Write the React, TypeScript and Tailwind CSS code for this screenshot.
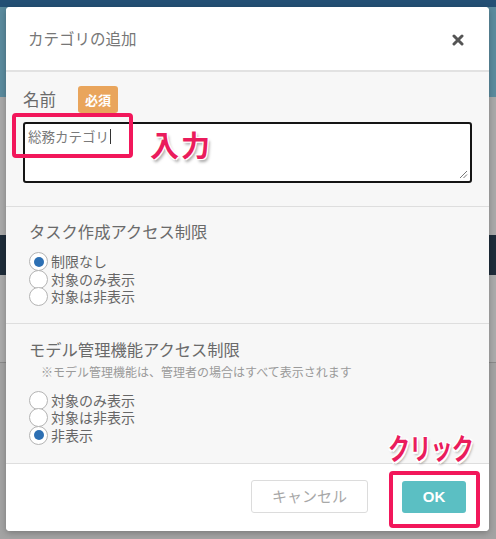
import React from 'react';

const jp = '[font-family:"Noto_Sans_CJK_JP","Noto_Sans",sans-serif]';

type Opt = { label: string; checked?: boolean };

const Radio: React.FC<Opt> = ({ label, checked }) => (
  <label className="flex items-center h-[17.5px]">
    <span className="relative flex items-center justify-center w-[19px] h-[19px] rounded-full border-[1.5px] border-[#b4b4b4] bg-white shrink-0">
      {checked && <span className="w-[10px] h-[10px] rounded-full bg-[#2c6fb3]" />}
    </span>
    <span className="ml-[3px] text-[14px] leading-[17.5px] text-[#666]">{label}</span>
  </label>
);

const Section: React.FC<{ title: string; note?: string; opts: Opt[]; className?: string }> = ({
  title,
  note,
  opts,
  className,
}) => (
  <div className={`px-[23px] border-b border-[#dedede] ${className || ''}`}>
    <h4 className="text-[16.3px] leading-[24px] text-[#6a6a6a]">{title}</h4>
    {note && <p className="mt-[2px] pl-[12px] text-[12px] leading-[18px] text-[#9a9a9a]">{note}</p>}
    <div className={note ? 'mt-[11px]' : 'mt-[10px]'}>
      {opts.map((o) => (
        <Radio key={o.label} {...o} />
      ))}
    </div>
  </div>
);

const App: React.FC = () => {
  return (
    <div className={`relative w-[496px] h-[539px] overflow-hidden bg-[#a6a6a6] ${jp}`}>
      {/* page behind the overlay */}
      <div className="h-[7px] bg-[#234f74]" />
      <div className="h-[90px] bg-[#5b8b9e]" />
      <div className="h-[138px] bg-[#a9a9a9]" />
      <div className="h-[40px] bg-[#1e2c3a]" />
      <div className="h-[88px] bg-[#ababab] border-b border-[#8a8a8a]" />
      <div className="h-[176px] bg-[#a3a3a3]" />

      {/* modal */}
      <div className="absolute top-[7px] left-[6px] w-[483px] rounded-[4px] bg-[#f7f7f7] shadow-[0_2px_6px_rgba(0,0,0,0.25)] overflow-hidden">
        <div className="h-[65px] bg-white border-b-2 border-[#e2e2e2] flex items-center justify-between pl-[22px] pr-[25px]">
          <h3 className="text-[15.5px] text-[#777]">カテゴリの追加</h3>
          <svg width="12" height="12" viewBox="0 0 12 12" className="mt-[2px]">
            <path d="M2 2 L10 10 M10 2 L2 10" stroke="#555" strokeWidth="3" strokeLinecap="round" />
          </svg>
        </div>

        <div className="px-[17px] pt-[14px] pb-[23px] border-b border-[#dedede]">
          <div className="flex items-center h-[27px]">
            <span className="text-[16.5px] text-[#6a6a6a]">名前</span>
            <span className="ml-[22px] h-[27px] px-[7px] flex items-center rounded-[3px] bg-[#e9a55c] text-white text-[13px] font-bold">
              必須
            </span>
          </div>
          <div className="mt-[9px] h-[61px] rounded-[3px] border-2 border-[#151515] bg-white relative">
            <div className="pl-[3px] pt-[3px] text-[13.5px] leading-[18px] text-[#7a7a7a] flex items-center">
              総務カテゴリ<span className="inline-block w-px h-[15px] bg-[#333] ml-[1px]" />
            </div>
            <svg width="9" height="9" viewBox="0 0 9 9" className="absolute right-[2px] bottom-[2px]">
              <path d="M8 1 L1 8 M8 4.5 L4.5 8" stroke="#777" strokeWidth="1" />
            </svg>
          </div>
        </div>

        <Section
          className="pt-[12px] pb-[17px]"
          title="タスク作成アクセス制限"
          opts={[{ label: '制限なし', checked: true }, { label: '対象のみ表示' }, { label: '対象は非表示' }]}
        />
        <Section
          className="pt-[13px] pb-[19px]"
          title="モデル管理機能アクセス制限"
          note="※モデル管理機能は、管理者の場合はすべて表示されます"
          opts={[{ label: '対象のみ表示' }, { label: '対象は非表示' }, { label: '非表示', checked: true }]}
        />

        <div className="h-[67px] bg-white flex items-start justify-end gap-[34px] pt-[16px] pr-[23px]">
          <button className="w-[117px] h-[33px] rounded-[3px] border border-[#dcdcdc] bg-white text-[15px] text-[#a8a8a8]">
            キャンセル
          </button>
          <button className="w-[64px] h-[32px] mt-[1px] rounded-[3px] bg-[#5bbfc3] text-white text-[15px] font-bold [font-family:Arial,'Liberation_Sans',sans-serif]">
            OK
          </button>
        </div>
      </div>

      {/* annotations */}
      <div className="absolute left-[12px] top-[113px] w-[121px] h-[45px] rounded-[4px] border-[4px] border-[#f2175b]" />
      <div className="absolute left-[150px] top-[124px] whitespace-nowrap text-[29px] leading-[40px] font-bold text-[#ea1c5c] [text-shadow:0_0_2px_#fff,1px_1px_0_#fff,-1px_-1px_0_#fff,1px_-1px_0_#fff,-1px_1px_0_#fff,2px_3px_3px_rgba(0,0,0,0.35)] tracking-[2px]">
        入力
      </div>
      <div className="absolute left-[388px] top-[427px] whitespace-nowrap origin-left scale-x-[0.76] text-[29px] leading-[40px] font-bold text-[#ea1c5c] [text-shadow:0_0_2px_#fff,1.5px_1.5px_0_#fff,-1.5px_-1.5px_0_#fff,1.5px_-1.5px_0_#fff,-1.5px_1.5px_0_#fff,2px_3px_3px_rgba(0,0,0,0.35)] tracking-[-1px]">
        クリック
      </div>
      <div className="absolute left-[389px] top-[471px] w-[91px] h-[57px] rounded-[4px] border-[4px] border-[#f2175b]" />
    </div>
  );
};

export default App;
